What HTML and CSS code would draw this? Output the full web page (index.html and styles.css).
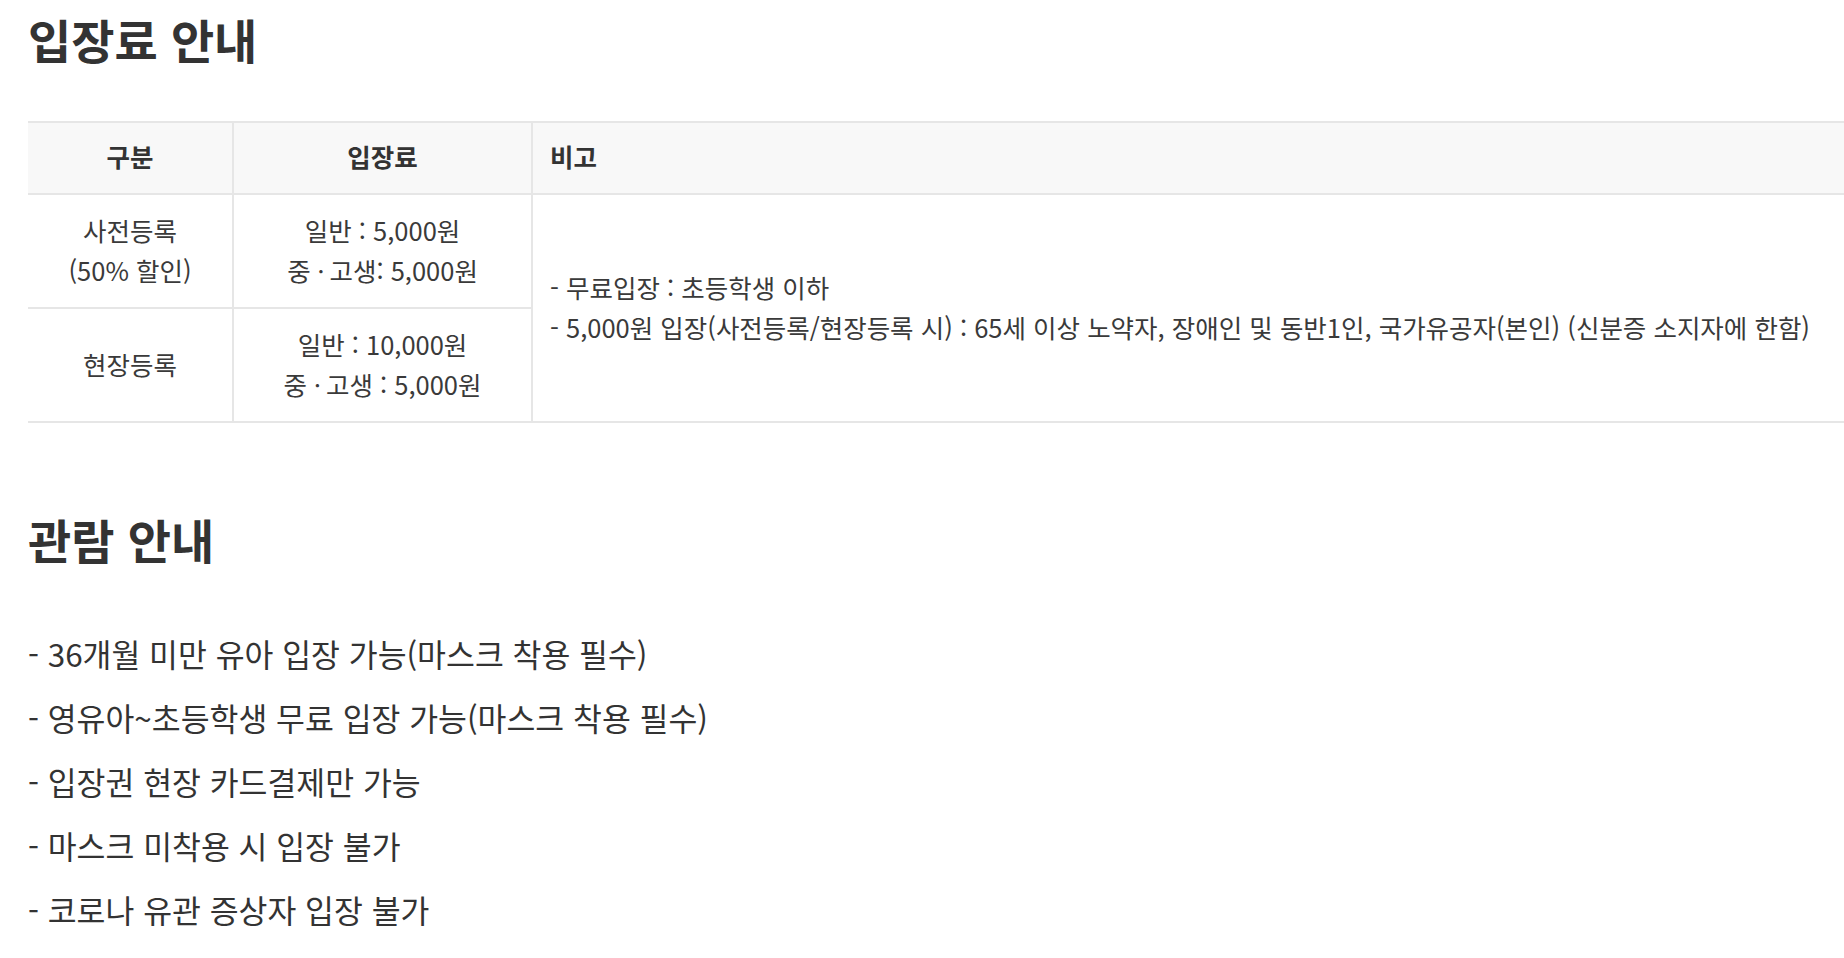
FILE: index.html
```html
<!DOCTYPE html>
<html lang="ko">
<head>
<meta charset="utf-8">
<title>입장료 안내</title>
<link rel="stylesheet" href="styles.css">
</head>
<body>
<div class="page">
  <h2 class="title">입장료 안내</h2>
  <table class="fee">
    <colgroup>
      <col class="col-type">
      <col class="col-fee">
      <col class="col-note">
    </colgroup>
    <thead>
      <tr>
        <th class="center">구분</th>
        <th class="center">입장료</th>
        <th class="left">비고</th>
      </tr>
    </thead>
    <tbody>
      <tr>
        <td class="center">사전등록<br>(50% 할인)</td>
        <td class="center">일반 : 5,000원<br>중<span class="dot">ㆍ</span>고생: 5,000원</td>
        <td class="left note" rowspan="2">- 무료입장 : 초등학생 이하<br>- 5,000원 입장(사전등록/현장등록 시) : 65세 이상 노약자, 장애인 및 동반1인, 국가유공자(본인) (신분증 소지자에 한함)</td>
      </tr>
      <tr>
        <td class="center">현장등록</td>
        <td class="center">일반 : 10,000원<br>중<span class="dot">ㆍ</span>고생 : 5,000원</td>
      </tr>
    </tbody>
  </table>

  <h2 class="title title-second">관람 안내</h2>
  <ul class="guide">
    <li>- 36개월 미만 유아 입장 가능(마스크 착용 필수)</li>
    <li>- 영유아~초등학생 무료 입장 가능(마스크 착용 필수)</li>
    <li>- 입장권 현장 카드결제만 가능</li>
    <li>- 마스크 미착용 시 입장 불가</li>
    <li>- 코로나 유관 증상자 입장 불가</li>
  </ul>
</div>
</body>
</html>
```

FILE: styles.css
```css
html, body {
  margin: 0;
  padding: 0;
  background: #ffffff;
  overflow: hidden;
}

body {
  font-family: "Noto Sans CJK KR", "Noto Sans", sans-serif;
  color: #333333;
}

.page {
  padding: 6px 0 0 28px;
}

.title {
  margin: 0;
  font-size: 47px;
  line-height: 65px;
  font-weight: 700;
  color: #333333;
}

.title-second {
  margin-top: 83px;
}

.fee {
  margin-top: 50px;
  width: 100%;
  border-collapse: collapse;
  table-layout: fixed;
  font-size: 25.5px;
  line-height: 40px;
  color: #3a3a3a;
  border-top: 2px solid #e6e6e6;
  border-bottom: 2px solid #e6e6e6;
}

.col-type { width: 205px; }
.col-fee { width: 299px; }

.fee th,
.fee td {
  padding: 15px 17px 17px;
  border: 2px solid #e6e6e6;
  vertical-align: middle;
}

.fee th {
  background: #f8f8f8;
  font-weight: 700;
  color: #333333;
  padding-top: 13px;
  padding-bottom: 17px;
}

.fee tr > :first-child {
  border-left: none;
}

.fee tr > :last-child {
  border-right: none;
}

.fee td.note {
  border-right: none;
}

.dot {
  letter-spacing: -0.12em;
  margin-left: -0.06em;
}

.center { text-align: center; }
.left { text-align: left; }

.guide {
  list-style: none;
  margin: 51px 0 0 0;
  padding: 0;
  font-size: 31.4px;
  line-height: 64px;
  color: #333333;
}
```
